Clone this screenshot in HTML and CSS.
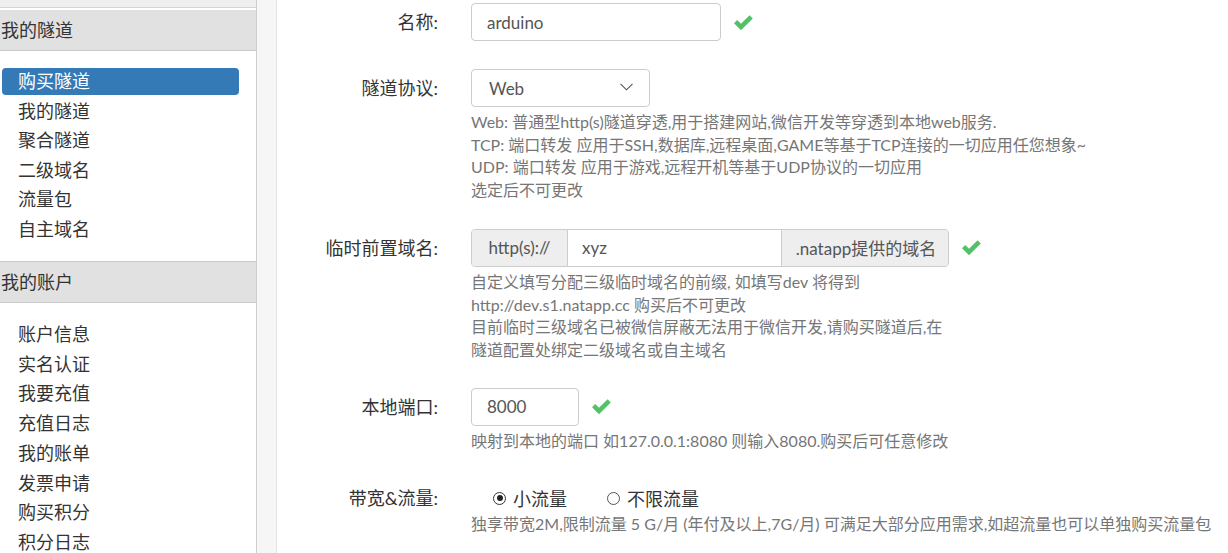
FILE: index.html
```html
<!DOCTYPE html>
<html lang="zh-CN">
<head>
<meta charset="utf-8">
<title>购买隧道</title>
<link rel="stylesheet" href="styles.css">
</head>
<body>
<div class="layout">
  <aside class="sidebar">
    <div class="topband"></div>
    <section class="panel first">
      <div class="panel-heading">我的隧道</div>
      <ul class="menu">
        <li class="active">购买隧道</li>
        <li>我的隧道</li>
        <li>聚合隧道</li>
        <li>二级域名</li>
        <li>流量包</li>
        <li>自主域名</li>
      </ul>
    </section>
    <section class="panel">
      <div class="panel-heading">我的账户</div>
      <ul class="menu">
        <li>账户信息</li>
        <li>实名认证</li>
        <li>我要充值</li>
        <li>充值日志</li>
        <li>我的账单</li>
        <li>发票申请</li>
        <li>购买积分</li>
        <li>积分日志</li>
      </ul>
    </section>
  </aside>
  <div class="gutter"></div>
  <main class="main">
    <form class="form">
      <div class="form-group g-name">
        <label class="label">名称:</label>
        <div class="control">
          <div class="field-row">
            <input class="input w-name" type="text" value="arduino">
            <svg class="check" viewBox="0 0 19 15" width="19" height="15"><path d="M0 8.2 L3.2 5 L7 8.8 L15.6 0.2 L18.8 3.4 L7 15.2 Z"/></svg>
          </div>
        </div>
      </div>

      <div class="form-group g-proto">
        <label class="label">隧道协议:</label>
        <div class="control">
          <div class="select w-select">
            <span>Web</span>
            <svg class="chev" viewBox="0 0 13 8" width="13" height="8"><polyline points="0.5,0.8 6.5,6.8 12.5,0.8"/></svg>
          </div>
          <div class="help">
            <div>Web: 普通型http(s)隧道穿透,用于搭建网站,微信开发等穿透到本地web服务.</div>
            <div>TCP: 端口转发 应用于SSH,数据库,远程桌面,GAME等基于TCP连接的一切应用任您想象~</div>
            <div>UDP: 端口转发 应用于游戏,远程开机等基于UDP协议的一切应用</div>
            <div>选定后不可更改</div>
          </div>
        </div>
      </div>

      <div class="form-group g-domain">
        <label class="label">临时前置域名:</label>
        <div class="control">
          <div class="field-row">
            <div class="input-group">
              <span class="addon a-left">http(s)://</span>
              <input class="group-input" type="text" value="xyz">
              <span class="addon a-right">.natapp提供的域名</span>
            </div>
            <svg class="check" viewBox="0 0 19 15" width="19" height="15"><path d="M0 8.2 L3.2 5 L7 8.8 L15.6 0.2 L18.8 3.4 L7 15.2 Z"/></svg>
          </div>
          <div class="help">
            <div>自定义填写分配三级临时域名的前缀, 如填写dev 将得到</div>
            <div>http://dev.s1.natapp.cc 购买后不可更改</div>
            <div>目前临时三级域名已被微信屏蔽无法用于微信开发,请购买隧道后,在</div>
            <div>隧道配置处绑定二级域名或自主域名</div>
          </div>
        </div>
      </div>

      <div class="form-group g-port">
        <label class="label">本地端口:</label>
        <div class="control">
          <div class="field-row">
            <input class="input w-port" type="text" value="8000">
            <svg class="check" viewBox="0 0 19 15" width="19" height="15"><path d="M0 8.2 L3.2 5 L7 8.8 L15.6 0.2 L18.8 3.4 L7 15.2 Z"/></svg>
          </div>
          <div class="help">
            <div>映射到本地的端口 如127.0.0.1:8080 则输入8080.购买后可任意修改</div>
          </div>
        </div>
      </div>

      <div class="form-group g-bw">
        <label class="label">带宽&amp;流量:</label>
        <div class="control">
          <div class="radios">
            <span class="radio"><span class="dot checked"></span>小流量</span>
            <span class="radio"><span class="dot"></span>不限流量</span>
          </div>
          <div class="help help-tight">
            <div>独享带宽2M,限制流量 5 G/月 (年付及以上,7G/月) 可满足大部分应用需求,如超流量也可以单独购买流量包</div>
          </div>
        </div>
      </div>
    </form>
  </main>
</div>
</body>
</html>
```
FILE: styles.css
```css
* { box-sizing: border-box; }

html, body {
  margin: 0;
  padding: 0;
  background: #fff;
}

body {
  font-family: "Lato", "Noto Sans CJK SC", sans-serif;
  color: #333;
  overflow: hidden;
}

.layout {
  display: flex;
  height: 553px;
}

/* ---------- sidebar ---------- */
.sidebar {
  width: 257px;
  flex: none;
  border-right: 1px solid #cfcfcf;
  background: #fff;
}

.topband {
  height: 8px;
  background: #efefef;
  border-bottom: 1px solid #d4d4d4;
  margin-bottom: 2px;
}

.panel-heading {
  height: 41px;
  background: #e1e1e1;
  border-bottom: 1px solid #cbcbcb;
  font-size: 18px;
  line-height: 40px;
  padding-left: 1px;
  color: #333;
}

.panel + .panel .panel-heading {
  border-top: 1px solid #cbcbcb;
  height: 42px;
}

.menu {
  list-style: none;
  margin: 0;
  padding: 17px 0 18px;
  display: flex;
  flex-direction: column;
  gap: 2.6px;
}

.panel + .panel .menu {
  padding-top: 18px;
  gap: 2.75px;
}

.menu li {
  margin-left: 2px;
  width: 237px;
  height: 27px;
  line-height: 27px;
  padding-left: 16px;
  font-size: 18px;
  color: #333;
  border-radius: 4px;
}

.menu li.active {
  background: #337ab7;
  color: #fff;
}

.gutter {
  width: 20px;
  flex: none;
  background: #f6f6f6;
  border-right: 1px solid #e3e3e3;
}

/* ---------- main ---------- */
.main {
  flex: 1;
  min-width: 0;
  padding-top: 3px;
}

.form-group {
  display: grid;
  grid-template-columns: 161px 1fr;
  column-gap: 33px;
  align-items: start;
}

.g-name { margin-bottom: 28px; }
.g-proto { margin-bottom: 27px; }
.g-domain { margin-bottom: 26px; }
.g-port { margin-bottom: 31px; }

.label {
  text-align: right;
  font-size: 18px;
  line-height: 38px;
  color: #333;
  white-space: nowrap;
}

.g-bw .label { line-height: 30px; }

.field-row {
  display: flex;
  align-items: center;
  gap: 13px;
}

.input {
  height: 38px;
  border: 1px solid #ccc;
  border-radius: 4px;
  padding: 0 15px;
  font-family: inherit;
  font-size: 17px;
  color: #555;
  background: #fff;
  outline: none;
}

.w-name { width: 250px; }
.w-port { width: 108px; }

.check {
  flex: none;
  fill: #52c168;
}

.select {
  height: 38px;
  width: 179px;
  border: 1px solid #ccc;
  border-radius: 4px;
  padding: 0 16px 0 17px;
  display: flex;
  align-items: center;
  justify-content: space-between;
  font-size: 17px;
  color: #555;
}

.chev {
  fill: none;
  stroke: #555;
  stroke-width: 1.1;
  margin-top: -3px;
}

.input-group {
  display: flex;
  width: 478px;
  height: 38px;
  border: 1px solid #ccc;
  border-radius: 4px;
  overflow: hidden;
}

.addon {
  background: #eee;
  color: #555;
  font-size: 17px;
  display: flex;
  align-items: center;
  justify-content: center;
  flex: none;
}

.a-left {
  width: 96px;
  border-right: 1px solid #ccc;
}

.a-right {
  width: 167px;
  border-left: 1px solid #ccc;
  padding-left: 2px;
}

.group-input {
  flex: 1;
  min-width: 0;
  border: 0;
  padding: 0 14px;
  font-family: inherit;
  font-size: 17px;
  color: #555;
  outline: none;
  background: #fff;
}

.help {
  margin-top: 4px;
  font-size: 16px;
  line-height: 22.7px;
  color: #767676;
  white-space: nowrap;
}

.help-tight { margin-top: 0; line-height: 22px; }

.radios {
  height: 30px;
  display: flex;
  align-items: center;
  padding-left: 22px;
  gap: 40px;
}

.radio {
  display: inline-flex;
  align-items: center;
  gap: 7px;
  font-size: 18px;
  color: #333;
}

.dot {
  width: 13px;
  height: 13px;
  border-radius: 50%;
  border: 1px solid #555;
  background: #fff;
  position: relative;
  flex: none;
}

.dot.checked {
  border-color: #333;
}

.dot.checked::after {
  content: "";
  position: absolute;
  left: 2.5px;
  top: 2.5px;
  width: 6px;
  height: 6px;
  border-radius: 50%;
  background: #222;
}
```
